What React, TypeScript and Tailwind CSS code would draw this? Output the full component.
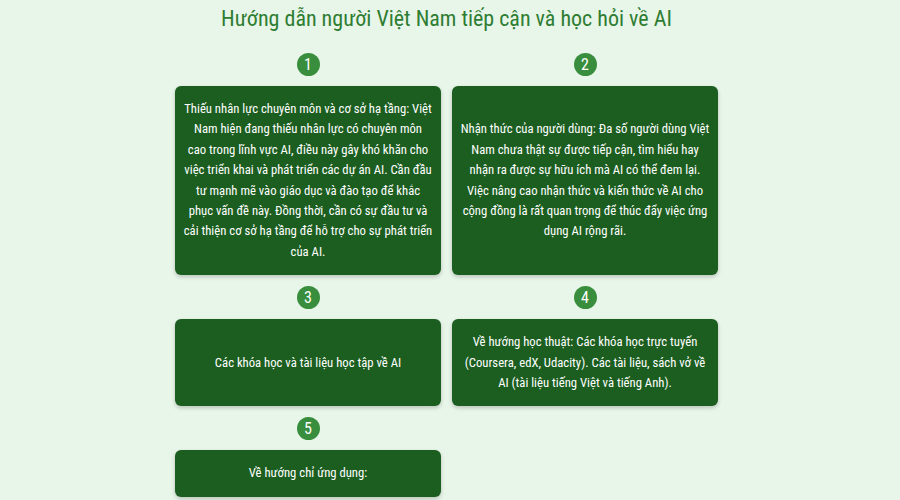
import React from "react";

const items = [
  "Thiếu nhân lực chuyên môn và cơ sở hạ tầng: Việt Nam hiện đang thiếu nhân lực có chuyên môn cao trong lĩnh vực AI, điều này gây khó khăn cho việc triển khai và phát triển các dự án AI. Cần đầu tư mạnh mẽ vào giáo dục và đào tạo để khắc phục vấn đề này. Đồng thời, cần có sự đầu tư và cải thiện cơ sở hạ tầng để hỗ trợ cho sự phát triển của AI.",
  "Nhận thức của người dùng: Đa số người dùng Việt Nam chưa thật sự được tiếp cận, tìm hiểu hay nhận ra được sự hữu ích mà AI có thể đem lại. Việc nâng cao nhận thức và kiến thức về AI cho cộng đồng là rất quan trọng để thúc đẩy việc ứng dụng AI rộng rãi.",
  "Các khóa học và tài liệu học tập về AI",
  "Về hướng học thuật: Các khóa học trực tuyến (Coursera, edX, Udacity). Các tài liệu, sách vở về AI (tài liệu tiếng Việt và tiếng Anh).",
  "Về hướng chỉ ứng dụng:",
];

export default function App() {
  return (
    <div
      className="h-screen overflow-y-scroll bg-[#e8f5e9]"
      style={{ fontFamily: "Roboto, 'Noto Sans', sans-serif", fontStretch: "75%" }}
    >
      <div className="pr-[7px] pb-4">
        <h1 className="pt-[3px] text-center text-[22px] leading-[32px] text-[#2e7d32]">
          Hướng dẫn người Việt Nam tiếp cận và học hỏi về AI
        </h1>
        <div className="mt-[18px] flex justify-center">
          <div className="grid w-[543px] grid-cols-2 gap-x-[11px] gap-y-[11px]">
            {items.map((t, i) => (
              <div key={i} className="flex flex-col items-center">
                <div className="flex h-[23px] w-[23px] items-center justify-center rounded-full bg-[#388e3c] text-[16px] leading-none text-white">
                  {i + 1}
                </div>
                <div className="mt-[10px] flex w-full flex-1 items-center justify-center rounded-[6px] bg-[#1b5e20] px-[8.5px] py-[13px] text-center text-[12.7px] leading-[20.4px] text-white shadow-[0_2px_4px_rgba(0,0,0,0.2)]">
                  {t}
                </div>
              </div>
            ))}
          </div>
        </div>
      </div>
    </div>
  );
}
